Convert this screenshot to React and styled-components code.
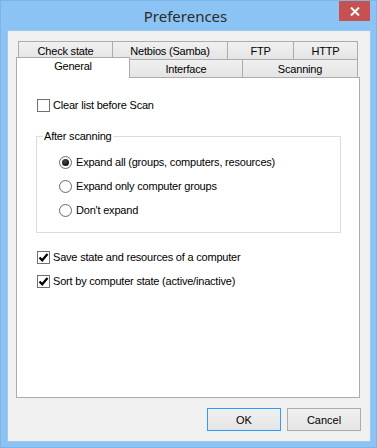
import React from 'react';
import styled, { createGlobalStyle } from 'styled-components';

const Global = createGlobalStyle`
  body{
    margin:0;
    background:#ffffff;
  }
`

const Window = styled.div`
  width:377px;
  height:448px;
  box-sizing:border-box;
  border:1px solid #7db5e6;
  background:#8bc4f4;
  display:flex;
  flex-direction:column;
  font-family:"Liberation Sans", Arial, sans-serif;
`

const TitleBar = styled.div`
  height:29px;
  display:grid;
  grid-template-columns:1fr auto 1fr;
  padding-right:6px;
`

const Title = styled.div`
  grid-column:2;
  align-self:center;
  font-family:"Noto Sans", "Open Sans", sans-serif;
  font-size:15px;
  color:#2a2a2a;
  line-height:20px;
`

const Close = styled.div`
  grid-column:3;
  justify-self:end;
  width:31px;
  height:20px;
  background:#c75050;
  display:flex;
  align-items:center;
  justify-content:center;
`

const Client = styled.div`
  flex:1;
  margin:0 5px 5px 6px;
  border:1px solid #9ec9ee;
  background:#f0f0f0;
  padding:10px 10px 10px 8px;
  display:flex;
  flex-direction:column;
`

const TabRow = styled.div`
  display:flex;
  align-items:flex-end;
  margin-left:${p => p.$indent || 0}px;
  margin-top:${p => p.$lift ? -2 : 0}px;
`

const Tab = styled.div`
  box-sizing:border-box;
  width:${p => p.$w}px;
  height:${p => p.$active ? 21 : 18}px;
  margin-left:-1px;
  margin-bottom:${p => p.$active ? -1 : 0}px;
  &:first-child{ margin-left:0; }
  border:1px solid #acacac;
  border-bottom:none;
  background:${p => p.$active ? '#ffffff' : 'linear-gradient(#f0f0f0, #e5e5e5)'};
  position:${p => p.$active ? 'relative' : 'static'};
  z-index:${p => p.$active ? 1 : 'auto'};
  font-size:11px;
  letter-spacing:-0.2px;
  color:#000;
  display:flex;
  justify-content:center;
  padding-top:${p => p.$active ? 2 : 3}px;
  line-height:13px;
`

const Panel = styled.div`
  box-sizing:border-box;
  width:344px;
  height:321px;
  border:1px solid #acacac;
  background:#ffffff;
  padding:15px 0 0 19px;
  display:flex;
  flex-direction:column;
`

const Row = styled.label`
  height:24px;
  display:flex;
  align-items:center;
  gap:${p => p.$radio ? 4 : 3}px;
  margin-left:${p => p.$radio ? 16 : 1}px;
  font-size:11px;
  letter-spacing:-0.2px;
  color:#000;
`

const Box = styled.span`
  box-sizing:border-box;
  width:13px;
  height:13px;
  border:1px solid #707070;
  background:#ffffff;
  display:flex;
  align-items:center;
  justify-content:center;
`

const Radio = styled.span`
  box-sizing:border-box;
  width:13px;
  height:13px;
  border-radius:50%;
  border:1px solid #6a6a6a;
  background:radial-gradient(circle at 50% 45%, #ffffff 55%, #e2e2e2);
  display:flex;
  align-items:center;
  justify-content:center;
  &::after{
    content:'';
    display:${p => p.$on ? 'block' : 'none'};
    width:7px;
    height:7px;
    border-radius:50%;
    background:radial-gradient(circle at 40% 35%, #4a4a4a, #111111 70%);
  }
`

const Group = styled.fieldset`
  box-sizing:border-box;
  width:305px;
  margin:13px 0 0 0;
  border:1px solid #dcdcdc;
  padding:7px 0 10px 6px;
  min-width:0;
`

const Legend = styled.legend`
  padding:0 1px;
  font-size:11px;
  letter-spacing:-0.2px;
  line-height:13px;
  color:#000;
`

const Checks = styled.div`
  margin-top:12px;
`

const Footer = styled.div`
  margin-top:10px;
  margin-right:-1px;
  display:flex;
  justify-content:flex-end;
  gap:6px;
`

const Button = styled.button`
  box-sizing:border-box;
  width:74px;
  height:23px;
  border:1px solid ${p => p.$default ? '#3399ff' : '#acacac'};
  background:linear-gradient(#f0f0f0, #e5e5e5);
  font-family:"Liberation Sans", Arial, sans-serif;
  font-size:11px;
  color:#000;
  padding:0;
  outline:none;
`

const Tick = () => (
  <svg width="11" height="11" viewBox="0 0 11 11">
    <path d="M1.5 5.5 L4.2 8.3 L9.5 2" fill="none" stroke="#000" strokeWidth="2.2" />
  </svg>
)

const Check = ({ on, children }) => (
  <Row>
    <Box>{on && <Tick />}</Box>
    {children}
  </Row>
)

const Option = ({ on, children }) => (
  <Row $radio>
    <Radio $on={on} />
    {children}
  </Row>
)

export default function App() {
  return (
    <Window>
      <Global />
      <TitleBar>
        <Title>Preferences</Title>
        <Close>
          <svg width="10" height="9" viewBox="0 0 10 9">
            <path d="M1 0.5 L9 8.5 M9 0.5 L1 8.5" stroke="#fff" strokeWidth="2" />
          </svg>
        </Close>
      </TitleBar>
      <Client>
        <TabRow $indent={2}>
          <Tab $w={95}>Check state</Tab>
          <Tab $w={116}>Netbios (Samba)</Tab>
          <Tab $w={67}>FTP</Tab>
          <Tab $w={65}>HTTP</Tab>
        </TabRow>
        <TabRow $lift>
          <Tab $w={114} $active>General</Tab>
          <Tab $w={114}>Interface</Tab>
          <Tab $w={116}>Scanning</Tab>
        </TabRow>
        <Panel>
          <Check>Clear list before Scan</Check>
          <Group>
            <Legend>After scanning</Legend>
            <Option on>Expand all (groups, computers, resources)</Option>
            <Option>Expand only computer groups</Option>
            <Option>Don't expand</Option>
          </Group>
          <Checks>
            <Check on>Save state and resources of a computer</Check>
            <Check on>Sort by computer state (active/inactive)</Check>
          </Checks>
        </Panel>
        <Footer>
          <Button $default>OK</Button>
          <Button>Cancel</Button>
        </Footer>
      </Client>
    </Window>
  );
}
